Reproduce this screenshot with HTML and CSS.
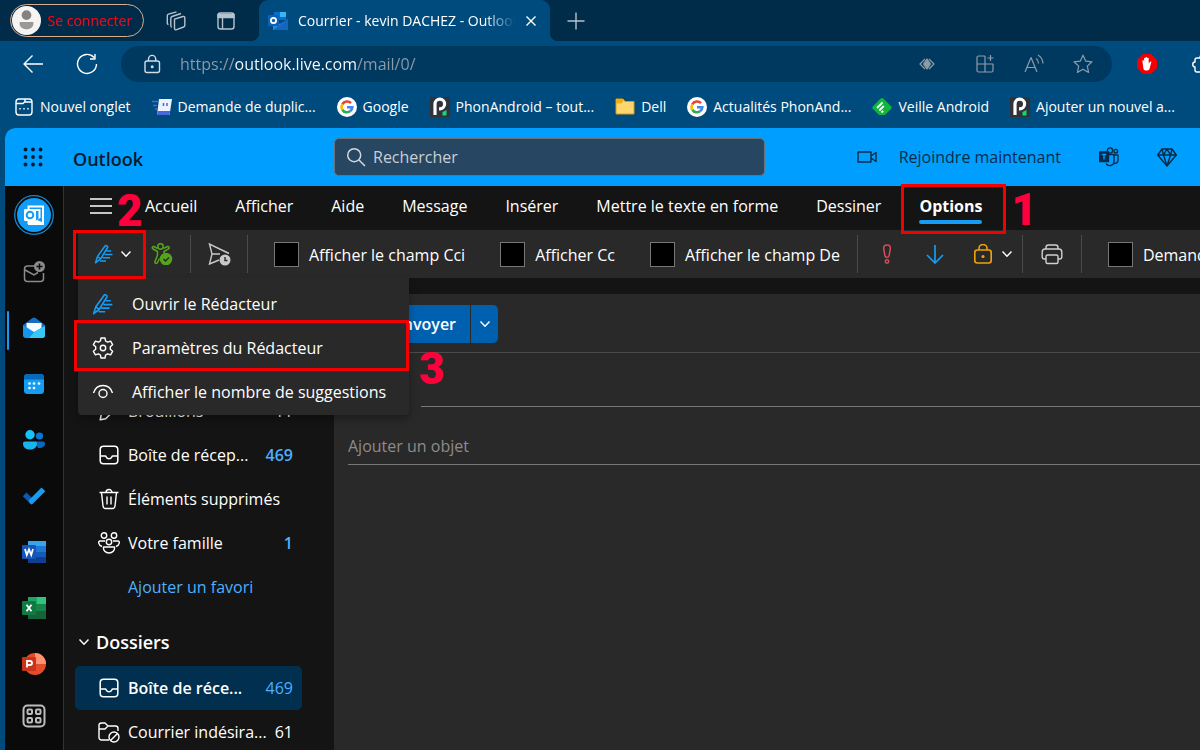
FILE: index.html
```html
<!DOCTYPE html>
<html lang="fr">
<head>
<meta charset="utf-8">
<title>Courrier - Outlook</title>
<link rel="stylesheet" href="styles.css">
</head>
<body>
<svg class="defs" aria-hidden="true">
  <symbol id="inbox" viewBox="0 0 20 20"><rect x="2" y="2" width="16" height="16" rx="3"/><path d="M2 11h4.500c.5 0 .8.3 1 .8.4 1 1.300 1.700 2.500 1.700s2.100-.7 2.500-1.700c.2-.5.5-.8 1-.8H18"/></symbol>
  <symbol id="chev" viewBox="0 0 12 12"><path d="M1.500 3.500 6 8.200l4.500-4.700"/></symbol>
  <symbol id="pen" viewBox="0 0 20 20"><path d="M1.500 18.800 3.500 12.500 11.200 1.800c.6-.8 3 .7 2.400 1.700L6.500 15zM4 13l2 1.500M12.500 7h4.700M10.500 10.500h8M8.500 13.800h7.500M6 17h6"/></symbol>
  <symbol id="google" viewBox="0 0 20 20"><circle cx="10" cy="10" r="10" fill="#fff"/><g fill="none" stroke-width="2.600"><path d="M14 6.200A5.400 5.400 0 0 0 5.300 7.300" stroke="#ea4335"/><path d="M5.300 7.300a5.400 5.400 0 0 0 0 5.400" stroke="#fbbc05"/><path d="M5.300 12.700a5.400 5.400 0 0 0 8 1.400" stroke="#34a853"/><path d="M10 10.300h5.300a5.400 5.400 0 0 1-2 3.800" stroke="#4285f4"/></g></symbol>
  <symbol id="phon" viewBox="0 0 20 20"><path d="M0 0h20v20H0z" fill="#30343a"/><path d="M5 18V7a4.800 4.800 0 1 1 4.800 4.800H9" fill="none" stroke="#fff" stroke-width="3.200"/><path d="M12.500 15 16.500 13v5.500h-4z" fill="#10d978"/></symbol>
</svg>

<header class="tabstrip">
  <button class="profile"><svg class="avatar" viewBox="0 0 30 30"><circle cx="15" cy="15" r="15" fill="#f6f4f3"/><circle cx="15" cy="9.500" r="5" fill="#858381"/><path d="M8 16.500h14c1 5-3 7.500-7 7.500s-8-2.500-7-7.500z" fill="#9b9997"/></svg>Se connecter</button>
  <button class="icon-btn collections" aria-label="Espaces de travail"><svg class="i20 line" viewBox="0 0 20 20"><path d="M8.500 8.200 17 5.500c1-.3 1.800.2 1.800 1.200v7.500c0 .8-.4 1.500-1.200 1.800l-7 2.700c-1.200.4-2.100 0-2.100-1.200zM5.800 16c-.8 0-1-.6-1-1.500V7.200c0-.8.4-1.400 1.200-1.700l9-3M2.500 13.500c-.8 0-1.200-.6-1.200-1.500V4.800c0-.8.5-1.400 1.200-1.600l8-2.400"/></svg></button>
  <button class="icon-btn panel" aria-label="Onglets verticaux"><svg class="i20 line" viewBox="0 0 20 20"><rect x="2" y="2" width="16" height="16" rx="2.500"/><path d="M2 3.500h16v3H2z" fill="#b6c3cf"/><path d="M6.500 6v12"/></svg></button>
  <div class="tab">
    <svg class="i20" viewBox="0 0 20 20"><path d="M6 1h12v8H6z" fill="#0a6ed0"/><path d="M12 1h6v5h-6z" fill="#35b8f1"/><path d="m5 9 7 4 8-5v11H5z" fill="#1a8ee2"/><path d="m5 19 15-11v11z" fill="#1666bd"/><rect y="4" width="11" height="11" rx="1" fill="#0b62bb"/><circle cx="5.500" cy="9.500" r="2.600" fill="none" stroke="#fff" stroke-width="1.800"/></svg>
    <span class="tab-title">Courrier - kevin DACHEZ - Outlook</span>
    <button class="icon-btn" aria-label="Fermer l'onglet"><svg class="i12 white" viewBox="0 0 12 12"><path d="m1.500 1.500 9 9m0-9-9 9"/></svg></button>
  </div>
  <button class="icon-btn newtab" aria-label="Nouvel onglet"><svg class="i20 line" viewBox="0 0 20 20"><path d="M10 1.500v17M1.500 10h17"/></svg></button>
</header>

<nav class="toolbar">
  <button class="icon-btn" aria-label="Retour"><svg class="i22 white" viewBox="0 0 22 22"><path d="M21 11H2m8.500-8.500L2 11l8.500 8.500"/></svg></button>
  <button class="icon-btn" aria-label="Actualiser"><svg class="i22 white" viewBox="0 0 22 22"><path d="M20.500 11A9.500 9.500 0 1 1 18 4.500M19 1v5h-5"/></svg></button>
  <div class="address">
    <svg class="i20 lock" viewBox="0 0 20 20"><rect x="3" y="7" width="14.500" height="11.500" rx="2"/><path d="M6.500 7V5a3.600 3.600 0 0 1 7.200 0v2"/><circle cx="10.200" cy="12.700" r=".8"/></svg>
    <input class="url" type="text" aria-label="Adresse" value="https://outlook.live.com/mail/0/">
    <svg class="i20 dim" viewBox="0 0 20 20"><path d="m8 5-5 5 5 5M12 5l5 5-5 5"/><path d="m10 5 3.500 5-3.500 5-3.500-5z" fill="#8f9ba6"/></svg>
    <svg class="i20 dim" viewBox="0 0 20 20"><path d="M10 2H3.500C2.500 2 2 2.500 2 3.500v13c0 1 .5 1.500 1.500 1.500h13c1 0 1.500-.5 1.500-1.500V10H2M10 2v16M15.500 1v6M12.500 4h6"/></svg>
    <svg class="i20 dim" viewBox="0 0 20 20"><path d="M1 18 7 3.500 13 18M3 13.500h8M12 4.500c1.800 1.200 2.500 2.800 2.500 5M14 1c3 1.800 4.800 4.500 5 8.500"/></svg>
    <svg class="i20 dim" viewBox="0 0 20 20"><path d="m10 1.200 2.700 5.900 6.300.7-4.700 4.300 1.300 6.300L10 15.200l-5.600 3.200 1.300-6.300L1 7.800l6.300-.7z"/></svg>
  </div>
  <svg class="i20 adblock" viewBox="0 0 20 20"><path d="M6 0h8l6 6v8l-6 6H6l-6-6V6z" fill="#f50000"/><path d="M6.500 15 5.500 8V6.500c.5-.8 1-.5 1.300.3l.3 2V4.300c.3-.8 1.200-.8 1.400 0V3.500c.3-.8 1.400-.8 1.600 0v.8c.3-.8 1.400-.8 1.600 0v5.200l1.500-1.700c.7-.6 1.500 0 1 .8L12.500 15c-1 2-5 2-6 0z" fill="#fff"/></svg>
  <svg class="i20 white ext" viewBox="0 0 20 20"><path d="M8 18H5a2 2 0 0 1-2-2v-3c-3 0-3-5 0-5V6a2 2 0 0 1 2-2h3c0-4 5-4 5 0h4"/></svg>
</nav>

<nav class="bookmarks">
  <a href="#"><svg class="i20 white" viewBox="0 0 20 20"><rect x="2" y="2" width="16" height="16" rx="3"/><path d="M2 6.500h7L11 4.500V2M11 5h7M6 11v1.500M10 11v1.500M14 11v1.500"/></svg>Nouvel onglet</a>
  <a href="#"><svg class="i20" viewBox="0 0 20 20"><path d="M7 2h13l-2.500 16H5z" fill="#edf2ff"/><path d="m5 18 .5-4h12.700l-.7 4z" fill="#4668dd"/><path d="M0 4.500h6M1 8.500h4M3 12h2" stroke="#4668dd" stroke-width="1.500"/><path d="M11.500 6v3M15 6v3" stroke="#4668dd" stroke-width="1.500"/></svg>Demande de duplic...</a>
  <a href="#"><svg class="i20"><use href="#google"/></svg>Google</a>
  <a href="#"><svg class="i20"><use href="#phon"/></svg>PhonAndroid – tout...</a>
  <a href="#"><svg class="i20" viewBox="0 0 20 20"><path d="M1 2h7l2 2.500h9V17H1z" fill="#ffd76e" stroke="#d99a12"/><path d="M1 2h7v3l-2 1.500H1z" fill="#f2af13"/></svg>Dell</a>
  <a href="#"><svg class="i20"><use href="#google"/></svg>Actualités PhonAnd...</a>
  <a href="#"><svg class="i20" viewBox="0 0 20 20"><path d="M8.600 1.600a2 2 0 0 1 2.800 0l7.600 7.600a2 2 0 0 1 0 2.800L13 18H7l-6-6a2 2 0 0 1 0-2.800z" fill="#0fb53c"/><path d="m5 11 5.500-5.500M7.300 13.500l4.500-4.500M9.500 15.500l1.700-1.700" stroke="#fff" stroke-width="1.800"/></svg>Veille Android</a>
  <a href="#"><svg class="i20"><use href="#phon"/></svg>Ajouter un nouvel a...</a>
</nav>

<div class="app">
  <header class="suite">
    <button class="icon-btn waffle" aria-label="Lanceur d'applications"><svg class="i20" viewBox="0 0 20 20" fill="#031a2c"><circle cx="2.500" cy="2.500" r="1.900"/><circle cx="10" cy="2.500" r="1.900"/><circle cx="17.500" cy="2.500" r="1.900"/><circle cx="2.500" cy="10" r="1.900"/><circle cx="10" cy="10" r="1.900"/><circle cx="17.500" cy="10" r="1.900"/><circle cx="2.500" cy="17.500" r="1.900"/><circle cx="10" cy="17.500" r="1.900"/><circle cx="17.500" cy="17.500" r="1.900"/></svg></button>
    <h1 class="brand">Outlook</h1>
    <label class="search"><svg class="i20" viewBox="0 0 20 20"><circle cx="8.200" cy="8.200" r="6.500"/><path d="m13 13 6 6"/></svg><input type="search" placeholder="Rechercher" aria-label="Rechercher"></label>
    <div class="suite-actions">
      <button class="join"><svg class="i20 dark" viewBox="0 0 20 20"><path d="M1 5h13v10H1zM14 9l5-3.500v9L14 11"/></svg>Rejoindre maintenant</button>
      <button class="icon-btn" aria-label="Teams"><svg class="i20 dark" viewBox="0 0 20 20"><circle cx="11" cy="3.500" r="2.600"/><circle cx="16.800" cy="4.200" r="1.800"/><path d="M10 7.500h5v7a4.300 4.300 0 0 1-8 2M15 8h4v5a3.500 3.500 0 0 1-4 3.500"/><path d="M.5 5h9v9.500h-9z" fill="#062b49"/><path d="M2.800 7.500h4.500M5 7.500v5" stroke="#009fff"/></svg></button>
      <button class="icon-btn" aria-label="Premium"><svg class="i20 dark" viewBox="0 0 20 20"><path d="M5 2h10l4.300 6L10 19 .7 8zM.7 8h18.600M10 2 6.500 8 10 19l3.500-11zM5 2l1.500 6M15 2l-1.500 6"/></svg></button>
    </div>
  </header>

  <div class="workspace">
    <nav class="rail" aria-label="Applications">
      <button class="account" aria-label="Compte"><svg viewBox="0 0 40 40"><circle cx="20" cy="20" r="19.300" fill="#0a0a0a" stroke="#1586d2" stroke-width="1.300"/><circle cx="20" cy="20" r="17" fill="#139cf6"/><path d="M14.500 11.500H29V28H14.500zM18 15h7.500v9" fill="none" stroke="#fff" stroke-width="2"/><path d="m14 23 7 3 9-5v9H14z" fill="#fff"/><rect x="10" y="14" width="12" height="12" rx="1" fill="#fff"/><circle cx="16" cy="20" r="3.300" fill="none" stroke="#139cf6" stroke-width="2"/><path d="m23 25 5-3v5z" fill="#139cf6"/></svg></button>
      <button aria-label="Nouveau message"><svg viewBox="0 0 24 24" class="rail-line"><path d="M13 6H5.500C3.500 6 2.500 7 2.500 9v9.500c0 2 1 3 3 3h13c2 0 3-1 3-3V13M3 10l9 5 4-2.500"/><circle cx="17.500" cy="6.500" r="5.500" fill="#8b8b8b" stroke="none"/><path d="M17.500 3.500v6M14.500 6.500h6" stroke="#0a0a0a"/></svg></button>
      <button class="current" aria-label="Courrier"><svg viewBox="0 0 24 24"><path d="m1 9 9.500-7a2.600 2.600 0 0 1 3 0L23 9v10H1z" fill="#176dc3"/><path d="M4.500 7h15v11h-15z" fill="#f7fbff"/><path d="m1 9 11 7 11-6v9c0 2-1 3-3 3H4c-2 0-3-1-3-3z" fill="#1695ee"/><path d="M7 22 12.500 16 23 10v9c0 2-1 3-3 3z" fill="#35c8f6"/></svg></button>
      <button aria-label="Calendrier"><svg viewBox="0 0 24 24"><rect x="2" y="2" width="20" height="20" rx="3.500" fill="#159df1"/><path d="M2 7.500V5.500A3.500 3.500 0 0 1 5.500 2h13A3.500 3.500 0 0 1 22 5.500v2z" fill="#0868ba"/><g fill="#fff"><circle cx="7.500" cy="11.500" r="1.300"/><circle cx="12" cy="11.500" r="1.300"/><circle cx="17" cy="11.500" r="1.300"/><circle cx="7.500" cy="16" r="1.300"/><circle cx="12" cy="16" r="1.300"/></g></svg></button>
      <button aria-label="Contacts"><svg viewBox="0 0 24 24"><circle cx="17.500" cy="8" r="3.600" fill="#0b76d5"/><path d="M13 13.500h8c1.500 0 2 1 2 2 0 3-3 5-7 4.500z" fill="#0b67c1"/><circle cx="8" cy="6.800" r="4.700" fill="#16c3f8"/><path d="M3 13.500h10c1.200 0 2 .8 2 2C15 19.500 12 21.500 8 21.500S1 19.500 1 15.500c0-1.200.8-2 2-2z" fill="#18b4ed"/></svg></button>
      <button aria-label="To Do"><svg viewBox="0 0 24 24"><path d="m.8 12.300 3.700-3.700 7 7-3.700 3.700z" fill="#0a59b5"/><path d="m7.800 19.300-1-3L19.500 3.400 23.300 7.200 10.500 20c-1 1-1.700.3-2.700-.7z" fill="#159cf5"/></svg></button>
      <button aria-label="Word"><svg viewBox="0 0 24 24"><path d="M6 1h18v6H6z" fill="#35a6ed"/><path d="M6 6h18v6H6z" fill="#1d78d2"/><path d="M6 12h18v6H6z" fill="#145abb"/><path d="M6 17h18v6H6z" fill="#103f91"/><rect y="5" width="14" height="14" rx="1" fill="#1655b5"/><path d="m3 9 1.800 6L7 9.500 9.200 15 11 9" class="mark"/></svg></button>
      <button aria-label="Excel"><svg viewBox="0 0 24 24"><path d="M6 1h18v22H6z" fill="#168548"/><path d="M15 1h9v7h-9z" fill="#31c481"/><path d="M6 1h9v7H6z" fill="#1ca564"/><path d="M6 15h18v8H6z" fill="#15633b"/><rect y="5" width="14" height="14" rx="1" fill="#117a42"/><path d="m4.500 8.800 5 6.500m0-6.500-5 6.500" class="mark"/></svg></button>
      <button aria-label="PowerPoint"><svg viewBox="0 0 24 24"><circle cx="13" cy="12" r="11" fill="#e44c2a"/><path d="M13 1a11 11 0 0 1 11 11H13z" fill="#ff9270"/><rect y="5" width="14" height="14" rx="1" fill="#c83419"/><path d="M5 15.500V9h2.800c3 0 3 4 0 4H5" class="mark"/></svg></button>
      <button class="more" aria-label="Autres applications"><svg viewBox="0 0 24 24" class="rail-line apps"><rect x="1.500" y="1.500" width="21" height="21" rx="4"/><rect x="5.500" y="5.500" width="4.500" height="4.500" rx="1"/><rect x="14" y="5.500" width="4.500" height="4.500" rx="1"/><rect x="5.500" y="14" width="4.500" height="4.500" rx="1"/><rect x="14" y="14" width="4.500" height="4.500" rx="1"/></svg></button>
    </nav>

    <div class="main">
      <nav class="ribbon-tabs">
        <button class="icon-btn menu-btn" aria-label="Menu"><svg class="i22 white" viewBox="0 0 22 22"><path d="M0 4h22M0 11h22M0 18h22"/></svg></button>
        <span class="step step-two">2</span>
        <button>Accueil</button><button>Afficher</button><button>Aide</button><button>Message</button><button>Insérer</button><button>Mettre le texte en forme</button><button>Dessiner</button>
        <button class="selected">Options<span class="frame frame-options"></span><span class="step step-one">1</span></button>
      </nav>

      <div class="ribbon">
        <button class="editor-btn" aria-label="Rédacteur"><svg class="i20 blue"><use href="#pen"/></svg><svg class="i12 white"><use href="#chev"/></svg><span class="frame frame-editor"></span></button>
        <button class="icon-btn check-access" aria-label="Accessibilité"><svg class="i22" viewBox="0 0 22 22" fill="none" stroke="#55a51c" stroke-width="1.500"><circle cx="9.500" cy="3.500" r="2.700"/><path d="M6.500 5.500 3 3.500C1.500 3 .5 5 2 6l4.500 2.500V12L4 18.500c-.5 2 1.800 2.500 2.500 1l2-4M12.500 5.500 16.500 3.500c1.500-.5 2.200 1.500 1 2.500L13 8.500v2"/><circle cx="15" cy="16" r="5.500" fill="#55a51c"/><path d="m12.500 16 2 2 3.500-3.500" stroke="#292929"/></svg></button>
        <span class="rule"></span>
        <button class="icon-btn later" aria-label="Programmer l'envoi"><svg class="i24" viewBox="0 0 24 24" fill="none" stroke="#c9c9c9" stroke-width="1.400"><path d="m12 18-9.500 4L5 12 2.500 2 22 11.500M5 12h8"/><circle cx="18" cy="18" r="5.500" fill="#c9c9c9" stroke="none"/><path d="M18 15v3.500h2.500" stroke="#292929"/></svg></button>
        <span class="rule"></span>
        <label class="check"><input type="checkbox">Afficher le champ Cci</label>
        <label class="check"><input type="checkbox">Afficher Cc</label>
        <label class="check"><input type="checkbox">Afficher le champ De</label>
        <span class="rule"></span>
        <div class="tools">
          <button class="icon-btn" aria-label="Importance haute"><svg class="i20" viewBox="0 0 20 20" fill="none" stroke="#d94a58" stroke-width="1.500"><path d="M10 1C7.500 1 6.300 2.500 6.700 5l1.300 7c.3 1.800 3.700 1.800 4 0l1.300-7C13.700 2.500 12.500 1 10 1z"/><circle cx="10" cy="17.500" r="1.700"/></svg></button>
          <button class="icon-btn" aria-label="Importance faible"><svg class="i20" viewBox="0 0 20 20" fill="none" stroke="#159cf5" stroke-width="1.700"><path d="M10 1v18m-8-8 8 8 8-8"/></svg></button>
          <button class="icon-btn sens" aria-label="Confidentialité"><svg class="i20" viewBox="0 0 20 20" fill="none" stroke="#f0a30a" stroke-width="1.600"><rect x="1.800" y="6" width="16.400" height="13" rx="2.500"/><path d="M6 6V4.500a4 4 0 0 1 8 0V6"/><circle cx="10" cy="12.500" r=".8"/></svg><svg class="i12 white"><use href="#chev"/></svg></button>
        </div>
        <span class="rule"></span>
        <button class="icon-btn print" aria-label="Imprimer"><svg class="i22" viewBox="0 0 22 22" fill="none" stroke="#d0d0d0" stroke-width="1.400"><path d="M5 6V4.500C5 3 6 2 7.500 2h7C16 2 17 3 17 4.500V6M5 16H3.500C2 16 1.200 15.200 1.200 13.700V9c0-2 1-3 3-3h13.600c2 0 3 1 3 3v4.700c0 1.500-.8 2.300-2.300 2.300H17"/><rect x="5" y="12" width="12" height="8.500" rx="1.500"/></svg></button>
        <span class="rule"></span>
        <label class="check last"><input type="checkbox">Demander un accusé de lecture</label>

        <div class="menu" role="menu">
          <button role="menuitem"><svg class="i22 blue"><use href="#pen"/></svg>Ouvrir le Rédacteur</button>
          <button role="menuitem"><svg class="i22 white" viewBox="0 0 22 22"><path d="M9 1h4l.6 3 2 1.200 3-1 2 3.500-2.300 2v2.600l2.300 2-2 3.500-3-1-2 1.200L13 21H9l-.6-3-2-1.200-3 1-2-3.500 2.300-2V9.700l-2.300-2 2-3.500 3 1 2-1.200z"/><circle cx="11" cy="11" r="2.700"/></svg>Paramètres du Rédacteur<span class="frame frame-settings"></span></button>
          <button role="menuitem"><svg class="i22 white" viewBox="0 0 22 22"><path d="M1.500 12C3 7 6.500 4.500 11 4.500S19 7 20.500 12"/><circle cx="11" cy="12.500" r="4"/></svg>Afficher le nombre de suggestions</button>
          <span class="step step-three">3</span>
        </div>
      </div>

      <div class="panes">
        <aside class="folders">
          <a href="#" class="folder"><svg class="i20 white" viewBox="0 0 20 20"><path d="m2 18 1-5L13 3c3-2 6 1 4 4L7 17z"/></svg><span>Brouillons</span><b>11</b></a>
          <a href="#" class="folder unread"><svg class="i22 white"><use href="#inbox"/></svg><span>Boîte de récep...</span><b>469</b></a>
          <a href="#" class="folder"><svg class="i22 white" viewBox="0 0 22 22"><path d="M1.500 4.500h19M8 4.500a3 3 0 0 1 6 0M3.500 4.500 5 18c.2 1.700 1 2.500 2.500 2.500h7c1.500 0 2.300-.8 2.500-2.500l1.500-13.500M9 8.500v8M13 8.500v8"/></svg><span>Éléments supprimés</span></a>
          <a href="#" class="folder unread"><svg class="i22 white" viewBox="0 0 22 22"><circle cx="6" cy="3.500" r="2.700"/><circle cx="16" cy="3.500" r="2.700"/><circle cx="11" cy="10" r="2.700"/><path d="M7 9H2C0 9 0 13 4 14.500M15 9h5c2 0 2 4-2 5.500M5.500 15h11c.5 3.500-2 6-5.500 6s-6-2.500-5.500-6z"/></svg><span>Votre famille</span><b>1</b></a>
          <a href="#" class="add-fav">Ajouter un favori</a>
          <h2><svg class="i12 white"><use href="#chev"/></svg>Dossiers</h2>
          <a href="#" class="folder active"><svg class="i22 white"><use href="#inbox"/></svg><span>Boîte de réce...</span><b>469</b></a>
          <a href="#" class="folder"><svg class="i22 white" viewBox="0 0 22 22"><path d="M11 19H3.500C2 19 1 18 1 16.500V4.500C1 3 2 2 3.500 2H7l3 3h7.500C19 5 20 6 20 7.500V10M1 8h6l3-3"/><circle cx="16" cy="16" r="5"/><path d="m12.500 19.500 7-7"/></svg><span>Courrier indésira...</span><b>61</b></a>
        </aside>
        <section class="compose">
          <div class="send-row">
            <button class="send">Envoyer</button><button class="send-more" aria-label="Options d'envoi"><svg class="i12 white"><use href="#chev"/></svg></button>
          </div>
          <div class="to-row"><button class="to" aria-label="À"></button><input type="text" aria-label="Destinataires"></div>
          <input class="subject" type="text" placeholder="Ajouter un objet" aria-label="Objet">
        </section>
      </div>
    </div>
  </div>
</div>
</body>
</html>
```
FILE: styles.css
```css
* { box-sizing: border-box; }
html, body { height: 100%; }
body {
  margin: 0;
  display: flex;
  flex-direction: column;
  overflow: hidden;
  background: #004b7e;
  color: #fff;
  font: 16px/24px "Open Sans", "Noto Sans", sans-serif;
}
button, input { font: inherit; color: inherit; }
button { background: none; border: 0; padding: 0; }
input { min-width: 0; outline: 0; }
a { color: inherit; text-decoration: none; }
svg { flex: none; display: block; }
.defs { position: absolute; width: 0; height: 0; }
.i12 { width: 12px; height: 12px; }
.i20 { width: 20px; height: 20px; }
.i22 { width: 22px; height: 22px; }
.i24 { width: 24px; height: 24px; }
.white, .line, .dim, .dark, .blue, .lock { fill: none; stroke-width: 1.4; stroke-linejoin: round; }
.white { stroke: #fff; }
.line { stroke: #b6c3cf; }
.dim { stroke: #8f9ba6; }
.dark { stroke: #062b49; }
.blue { stroke: #159cf5; stroke-width: 1.5; }
.lock { stroke: #d5dde4; }
.icon-btn { display: flex; align-items: center; }

.tabstrip { display: flex; flex: none; height: 41px; background: #002b49; align-items: center; }
.profile {
  display: flex;
  align-items: center;
  gap: 6px;
  width: 134px;
  height: 33px;
  margin-left: 10px;
  padding-left: 1px;
  border: 1px solid #d9ad8c;
  border-radius: 17px;
  color: #f5000c;
  font-size: 14px;
  white-space: nowrap;
}
.avatar { width: 29px; height: 29px; }
.collections { margin-left: 22px; }
.panel { margin-left: 30px; }
.tab {
  position: relative;
  display: flex;
  align-items: center;
  gap: 10px;
  align-self: stretch;
  width: 291px;
  margin-left: 23px;
  padding: 0 13px 0 9px;
  background: #004b7e;
  border-radius: 9px 9px 0 0;
  font-size: 14px;
}
.tab::before, .tab::after { content: ""; position: absolute; bottom: 0; width: 8px; height: 8px; }
.tab::before { left: -8px; background: radial-gradient(circle at 0 0, #002b49 8px, #004b7e 8px); }
.tab::after { right: -8px; background: radial-gradient(circle at 100% 0, #002b49 8px, #004b7e 8px); }
.tab-title {
  flex: 1;
  overflow: hidden;
  white-space: nowrap;
  mask-image: linear-gradient(to right, #000 86%, transparent);
}
.newtab { margin-left: 16px; }

.toolbar { display: flex; flex: none; align-items: center; height: 46px; padding-left: 22px; }
.toolbar > .icon-btn { margin-right: 32px; }
.toolbar > .icon-btn + .icon-btn { margin-right: 23px; }
.address {
  display: flex;
  flex: 1;
  align-items: center;
  gap: 29px;
  height: 36px;
  padding: 0 19px 0 21px;
  border-radius: 18px;
  background: #003960;
}
.url {
  flex: 1;
  margin-left: -11px;
  padding: 0;
  border: 0;
  color: transparent;
  background: linear-gradient(to right, #8f9ba6 55px, #fff 55px, #fff 177px, #8f9ba6 177px);
  -webkit-background-clip: text;
  background-clip: text;
}
.address .dim { stroke-width: 1.2; }
.address .dim:nth-of-type(2) { margin-right: 9px; }
.adblock { margin-left: 25px; }
.ext { margin: 0 -12px 0 35px; }

.bookmarks {
  display: flex;
  flex: none;
  align-items: center;
  gap: 21px;
  height: 41px;
  padding: 0 14px 2px;
  font-size: 14px;
  white-space: nowrap;
}
.bookmarks a { display: flex; align-items: center; gap: 6px; }

.app {
  display: flex;
  flex: 1;
  flex-direction: column;
  min-height: 0;
  margin-left: 5px;
  border-radius: 10px 0 0 0;
  overflow: hidden;
  background: #141414;
}
.suite { display: flex; flex: none; align-items: center; height: 58px; padding: 0 23px 0 18px; background: #009fff; color: #062b49; }
.brand { width: 261px; margin: 0 0 0 30px; padding-top: 3px; font-size: 18px; font-weight: 600; color: #031a2c; }
.search {
  display: flex;
  align-items: center;
  gap: 7px;
  width: 431px;
  height: 38px;
  padding: 0 11px;
  border: 1px solid #68727b;
  border-radius: 5px;
  background: #264661;
}
.search svg { fill: none; stroke: #d3d8dc; stroke-width: 1.5; }
.search input { flex: 1; border: 0; padding: 0; background: none; }
.search input::placeholder { color: #c9cfd5; opacity: 1; }
.suite-actions { display: flex; flex: 1; justify-content: flex-end; align-items: center; gap: 38px; white-space: nowrap; }
.join { display: flex; align-items: center; gap: 22px; }

.workspace { display: flex; flex: 1; min-height: 0; }
.rail { display: flex; flex: none; flex-direction: column; width: 59px; background: #0a0a0a; border-right: 1px solid #333; }
.rail button { position: relative; display: flex; flex: none; align-items: center; justify-content: center; height: 56px; }
.rail svg { width: 24px; height: 24px; }
.rail .account { height: 58px; }
.rail .account svg { width: 40px; height: 40px; }
.rail .more { height: 48px; }
.rail .current::before { content: ""; position: absolute; left: 2px; top: 11px; width: 2px; height: 39px; border-radius: 2px; background: #159cf5; }
.rail-line { fill: none; stroke: #8b8b8b; stroke-width: 1.5; }
.apps { stroke: #bcbcbc; stroke-width: 2; }
.mark { fill: none; stroke: #fff; stroke-width: 1.8; }

.main { display: flex; flex: 1; flex-direction: column; min-width: 0; }
.ribbon-tabs { position: relative; display: flex; flex: none; align-items: stretch; gap: 38px; height: 44px; padding: 0 0 4px 26px; white-space: nowrap; font-weight: 500; }
.menu-btn { margin-right: -5px; }
.selected { position: relative; font-weight: 700; }
.selected::after { content: ""; position: absolute; left: 0; right: 0; bottom: 2px; height: 4px; border-radius: 2px; background: #159cf5; }
.frame { position: absolute; border: 3px solid #f40000; pointer-events: none; z-index: 3; }
.frame-options { top: -2px; bottom: -8px; left: -18px; right: -24px; }
.step { position: absolute; z-index: 4; color: #ff003c; font: 900 44px/44px Roboto, sans-serif; pointer-events: none; }
.step-one { left: 92px; top: 2px; }
.step-two { left: 53px; top: 3px; }

.ribbon {
  position: relative;
  z-index: 2;
  display: flex;
  flex: none;
  align-items: center;
  height: 48px;
  margin-left: 14px;
  background: #292929;
  border-radius: 4px 0 0 4px;
  font-weight: 500;
  white-space: nowrap;
}
.editor-btn { position: relative; display: flex; align-items: center; gap: 6px; align-self: stretch; padding: 0 11px 0 16px; }
.frame-editor { inset: 0 -3px -1px -5px; }
.check-access { margin: 0 17px 0 8px; }
.rule { flex: none; width: 1px; height: 38px; background: #4b4b4b; }
.later { margin: 0 16px; }
.check { display: flex; align-items: center; gap: 10px; margin-right: 35px; padding-top: 1px; }
.rule + .check { margin-left: 26px; }
.check:has(+ .rule) { margin-right: 17px; }
.check input { appearance: none; flex: none; width: 25px; height: 25px; margin: 0; border: 1px solid #777; background: #000; }
.check.last { flex: 1; min-width: 0; margin-right: 0; overflow: hidden; }
.tools { display: flex; gap: 28px; padding: 0 9px 0 19px; }
.sens { gap: 8px; }
.print { margin: 0 18px; }

.menu {
  position: absolute;
  top: 48px;
  left: 0;
  width: 331px;
  padding: 4px 0 1px;
  background: #292929;
  border-radius: 0 0 4px 4px;
  box-shadow: 0 4px 8px rgba(0, 0, 0, .3);
  font-weight: 400;
}
.menu button { position: relative; display: flex; align-items: center; gap: 18px; width: 100%; height: 44px; padding-left: 14px; }
.frame-settings { inset: -6px 0 -1px -4px; }
.step-three { left: 341px; top: 69px; }

.panes { display: flex; flex: 1; min-height: 0; }
.folders { flex: none; width: 270px; padding: 111px 32px 0 11px; }
.folder { display: flex; align-items: center; gap: 8px; height: 44px; padding: 0 9px 0 23px; border-radius: 5px; white-space: nowrap; }
.folder svg { width: 22px; height: 22px; }
.folder span { flex: 1; }
.folder b { font-weight: 400; }
.folder.unread b { color: #4db0ff; font-weight: 600; }
.folder.active b { color: #4db0ff; }
.folder.active { background: #002f4f; }
.folder.active span { font-weight: 600; }
.add-fav { display: block; padding: 10px 0 10px 53px; color: #4db0ff; }
.folders h2 { display: flex; align-items: center; gap: 6px; margin: 0; padding: 21px 0 12px 3px; font-size: 18px; font-weight: 600; }

.compose { flex: 1; min-width: 0; margin-top: 16px; background: #292929; border-radius: 4px 0 0; }
.send-row { display: flex; height: 59px; padding: 11px 14px 9px; border-bottom: 1px solid #4b4b4b; }
.send { width: 122px; height: 38px; padding-right: 14px; text-align: right; border-radius: 5px 0 0 5px; background: #0060b0; font-weight: 600; }
.send-more { display: flex; align-items: center; justify-content: center; width: 28px; height: 38px; border-left: 1px solid #292929; border-radius: 0 5px 5px 0; background: #0060b0; }
.to-row { display: flex; gap: 12px; height: 54px; padding: 12px 0 0 14px; }
.to { width: 61px; height: 38px; border: 1px solid #666; border-radius: 4px; }
.to-row input { flex: 1; border: 0; border-bottom: 1px solid #777; background: none; }
.subject { display: block; width: calc(100% - 14px); height: 58px; margin-left: 14px; padding: 21px 0 0; border: 0; border-bottom: 1px solid #777; background: none; }
.subject::placeholder { color: #8c8c8c; opacity: 1; }
```
